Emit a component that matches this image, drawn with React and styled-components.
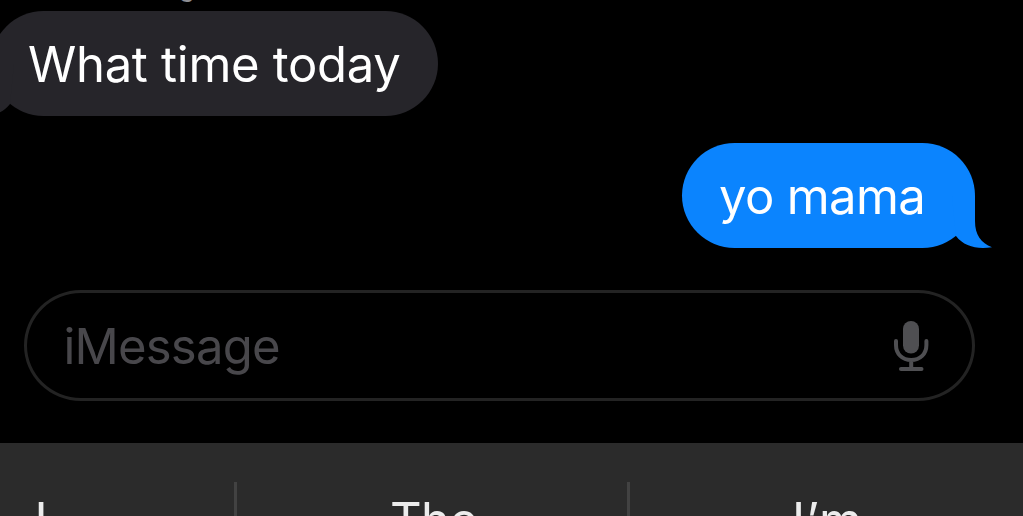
import React from 'react'
import styled, { createGlobalStyle } from 'styled-components'

const GlobalStyle = createGlobalStyle`
  body {
    margin: 0;
    background: #000;
  }
`

const Screen = styled.div`
  display: flex;
  flex-direction: column;
  width: 1023px;
  height: 516px;
  overflow: hidden;
  background: #000;
  font-family: Inter, 'Liberation Sans', sans-serif;
`

const Sender = styled.div`
  display: flex;
  flex: none;
  align-items: flex-end;
  height: 11px;
  padding-left: 179px;
  color: #8e8e93;
  font-size: 26px;
  line-height: 33px;
`

const SenderName = styled.span`
  margin-bottom: 8px;
`

const Thread = styled.div`
  display: flex;
  flex: none;
  flex-direction: column;
  gap: 27px;
  padding: 0 48px 42px 0;
`

const Bubble = styled.div`
  position: relative;
  display: flex;
  align-items: center;
  box-sizing: border-box;
  width: ${props => (props.$mine ? '293px' : '447px')};
  height: 105px;
  margin-left: ${props => (props.$mine ? 'auto' : '-9px')};
  padding-left: 37px;
  border-radius: 52.5px;
  background: ${props => (props.$mine ? '#0b84fe' : '#26252a')};
  color: #fff;
`

const BubbleText = styled.span`
  padding-top: 2px;
  font-size: 49px;
  line-height: 60px;
  letter-spacing: ${props => props.$spacing};
  white-space: nowrap;
`

const TailSvg = styled.svg`
  position: absolute;
  bottom: 0;
  ${props => (props.$mine ? 'right: -17px;' : 'left: -17px; transform: scaleX(-1);')}
  fill: ${props => (props.$mine ? '#0b84fe' : '#26252a')};
`

const Composer = styled.div`
  display: flex;
  flex: none;
  align-items: center;
  justify-content: space-between;
  box-sizing: border-box;
  height: 111px;
  margin: 0 48px 42px 24px;
  padding: 0 42px 0 36.5px;
  border: 3px solid #232323;
  border-radius: 57px / 55.5px;
`

const Placeholder = styled.span`
  padding-top: 2px;
  color: #48474b;
  font-size: 49px;
  line-height: 60px;
  letter-spacing: -0.8px;
`

const Suggestions = styled.div`
  display: grid;
  flex: none;
  grid-template-columns: 234px 3px 390px 3px 393px;
  height: 73px;
  background: #2b2b2b;
`

const Suggestion = styled.div`
  margin-top: 48px;
  padding-left: ${props => props.$inset};
  color: #ececec;
  font-size: 49px;
  line-height: 60px;
  letter-spacing: ${props => props.$spacing || '-0.6px'};
  white-space: nowrap;
`

const Divider = styled.div`
  margin-top: 39px;
  background: #424242;
`

const Tail = ({ mine }) => (
  <TailSvg $mine={mine} width="40" height="52" viewBox="0 0 40 52">
    <path d="M0 0H23V25C23 39 29 47 40 51.2C25 53.5 12 50.5 4 40Z" />
  </TailSvg>
)

const Message = ({ mine, text, spacing }) => (
  <Bubble $mine={mine}>
    <Tail mine={mine} />
    <BubbleText $spacing={spacing}>{text}</BubbleText>
  </Bubble>
)

const MicIcon = () => (
  <svg width="36" height="52" viewBox="0 0 36 52" fill="none" stroke="#4f4f52" strokeWidth="4" strokeLinecap="round">
    <rect x="9" y="1" width="16" height="32.5" rx="8" fill="#4f4f52" stroke="none" />
    <path d="M2 21V25C2 34 8.3 40 17.2 40S32.4 34 32.4 25V21M17.2 40V49M7 49H27.5" />
  </svg>
)

const App = () => (
  <>
    <GlobalStyle />
    <Screen>
      <Sender><SenderName>g</SenderName></Sender>
      <Thread>
        <Message text="What time today" spacing="-0.3px" />
        <Message mine text="yo mama" spacing="-0.65px" />
      </Thread>
      <Composer>
        <Placeholder>iMessage</Placeholder>
        <MicIcon />
      </Composer>
      <Suggestions>
        <Suggestion $inset="34.5px">I</Suggestion>
        <Divider />
        <Suggestion $inset="153px">The</Suggestion>
        <Divider />
        <Suggestion $inset="162px" $spacing="1px">I’m</Suggestion>
      </Suggestions>
    </Screen>
  </>
)

export default App
